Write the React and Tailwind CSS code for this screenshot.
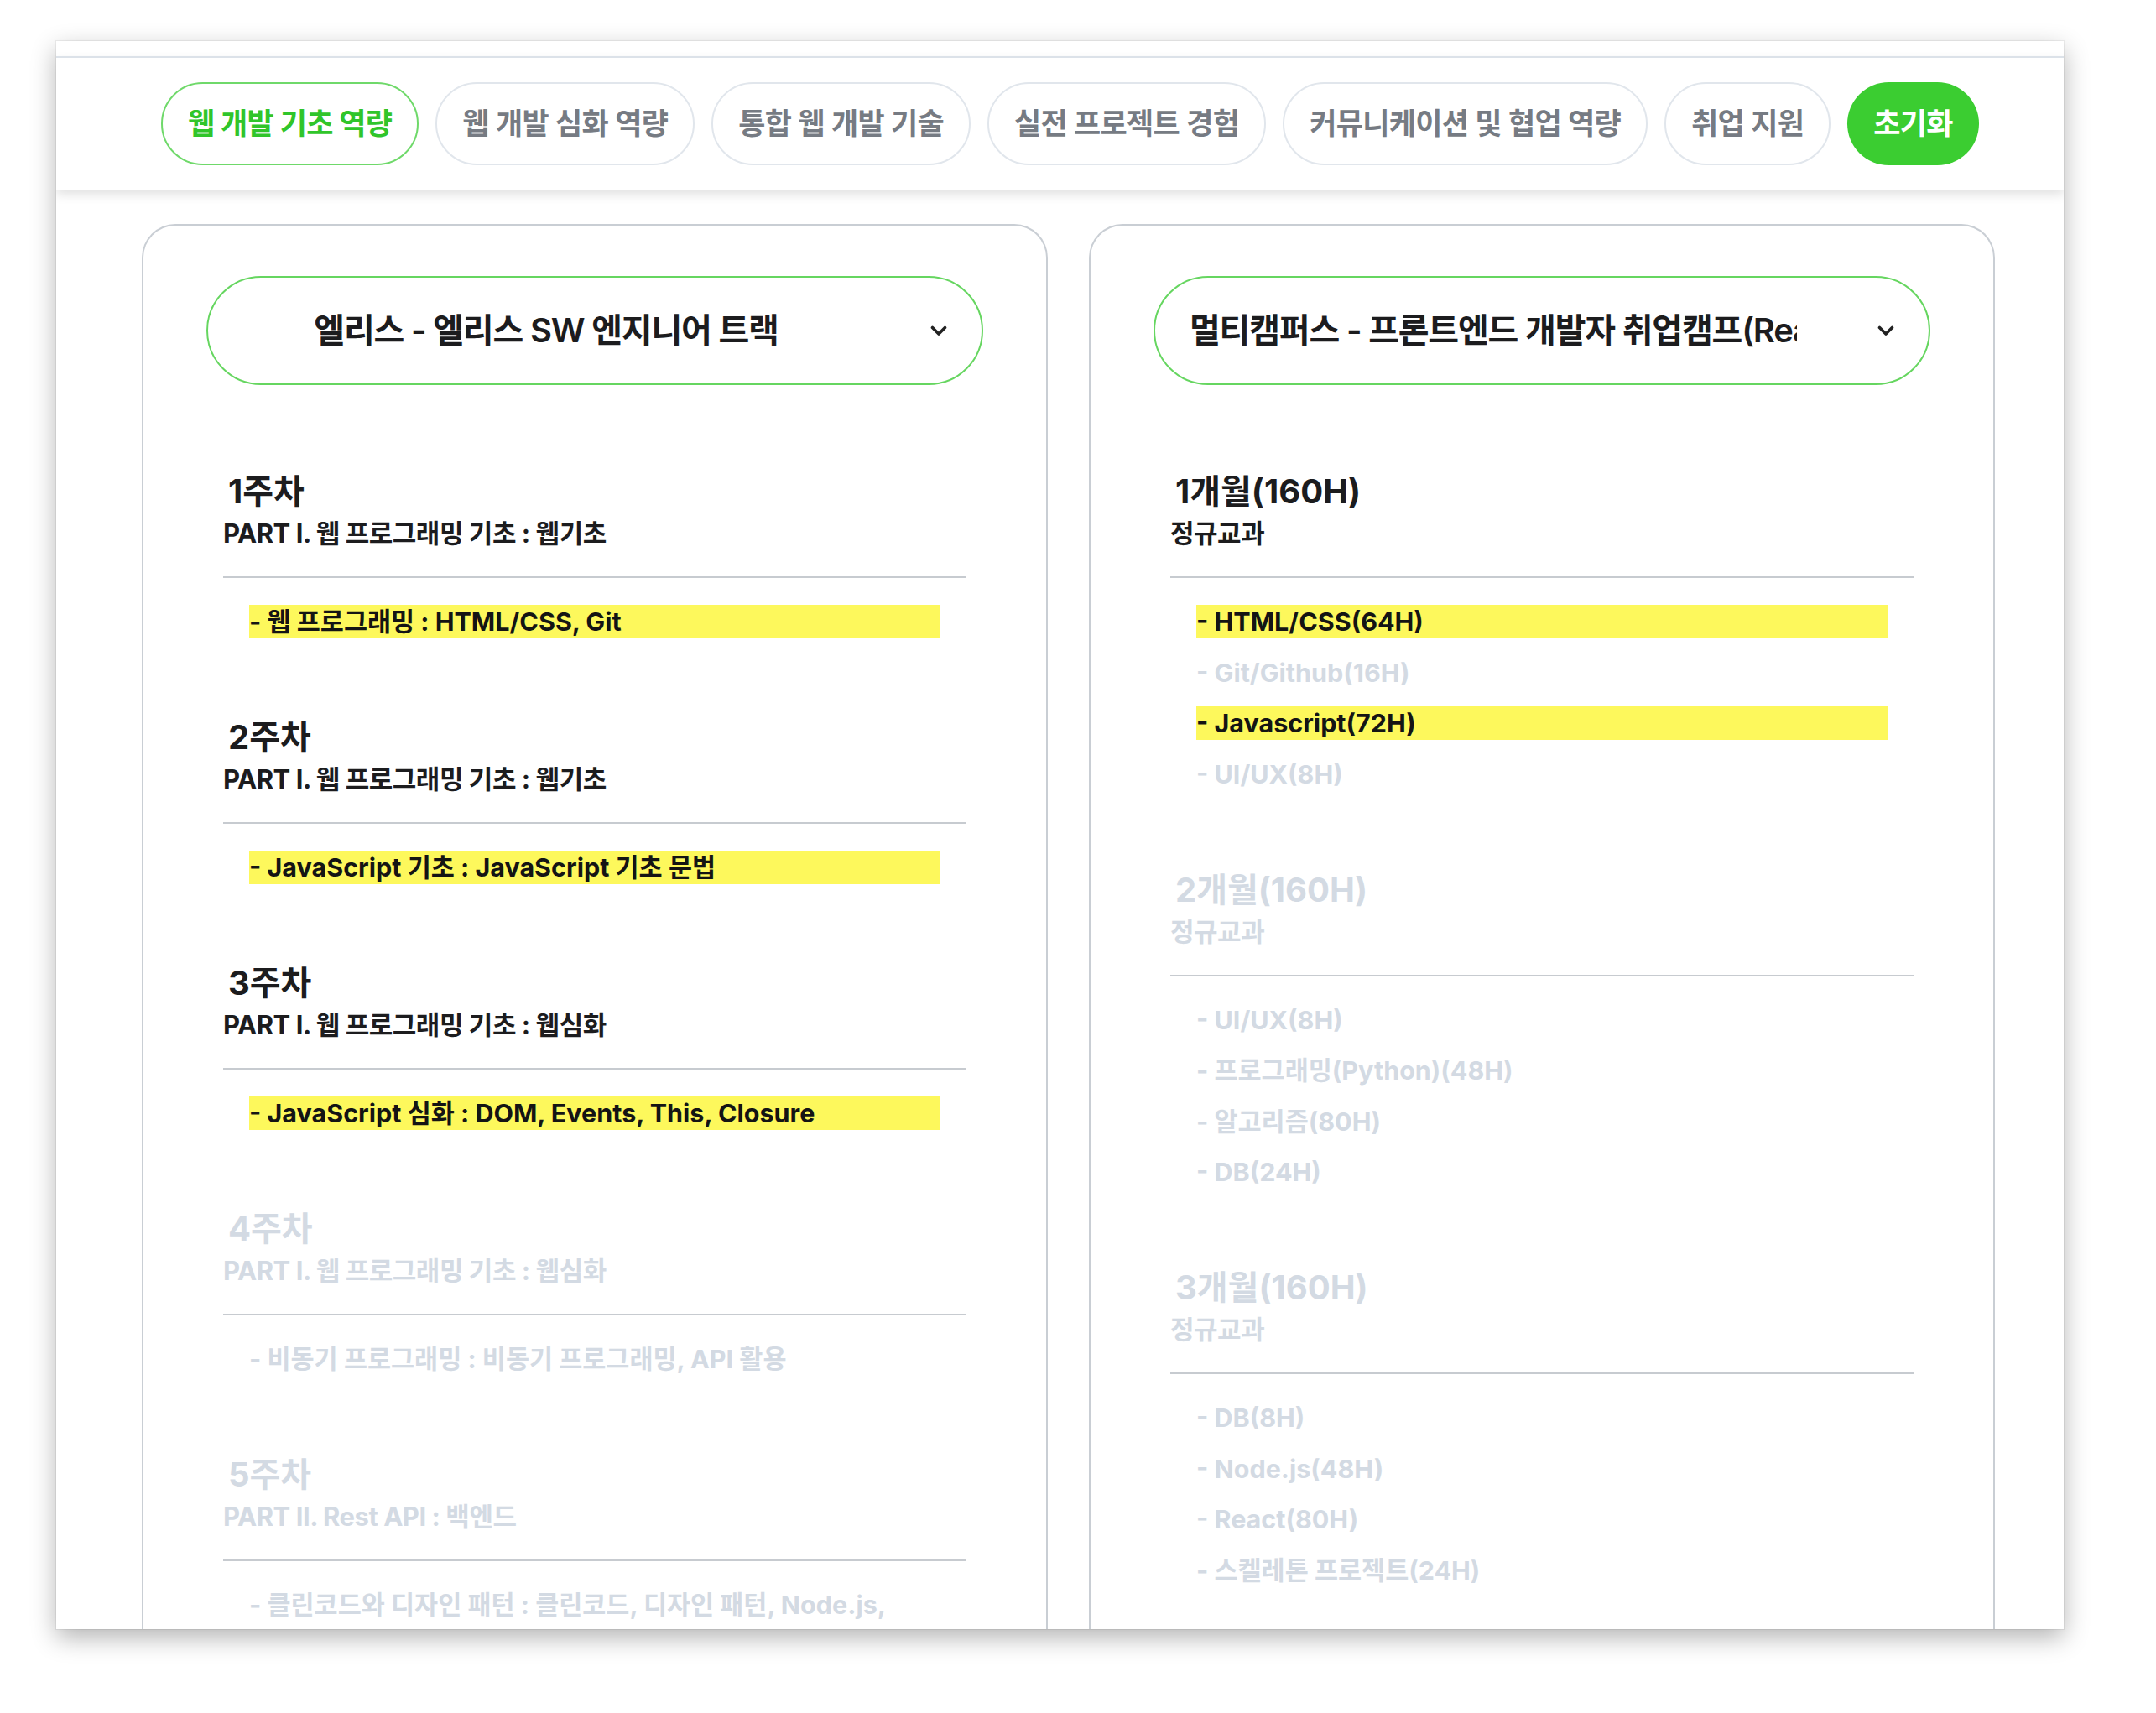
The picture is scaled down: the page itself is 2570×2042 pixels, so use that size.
/**
 * App.jsx — curriculum comparison view
 * Tab bar of competency filters on top, two course cards below,
 * each with a course select and a list of periods. Items that match
 * the active filter are highlighted, the rest are greyed out.
 */

const TABS = [
  { label: '웹 개발 기초 역량', active: true },
  { label: '웹 개발 심화 역량' },
  { label: '통합 웹 개발 기술' },
  { label: '실전 프로젝트 경험' },
  { label: '커뮤니케이션 및 협업 역량' },
  { label: '취업 지원' },
]

const LEFT = {
  course: '엘리스 - 엘리스 SW 엔지니어 트랙',
  sections: [
    { title: '1주차', sub: 'PART I. 웹 프로그래밍 기초 : 웹기초', on: true,
      items: [{ t: '- 웹 프로그래밍 : HTML/CSS, Git', hl: true }] },
    { title: '2주차', sub: 'PART I. 웹 프로그래밍 기초 : 웹기초', on: true,
      items: [{ t: '- JavaScript 기초 : JavaScript 기초 문법', hl: true }] },
    { title: '3주차', sub: 'PART I. 웹 프로그래밍 기초 : 웹심화', on: true,
      items: [{ t: '- JavaScript 심화 : DOM, Events, This, Closure', hl: true }] },
    { title: '4주차', sub: 'PART I. 웹 프로그래밍 기초 : 웹심화',
      items: [{ t: '- 비동기 프로그래밍 : 비동기 프로그래밍, API 활용' }] },
    { title: '5주차', sub: 'PART II. Rest API : 백엔드',
      items: [{ t: '- 클린코드와 디자인 패턴 : 클린코드, 디자인 패턴, Node.js, Express' }] },
    { title: '6주차', sub: 'PART II. Rest API : 백엔드',
      items: [{ t: '- 데이터베이스 : MongoDB, Mongoose' }] },
  ],
}

const RIGHT = {
  course: '멀티캠퍼스 - 프론트엔드 개발자 취업캠프(React & Vue)',
  sections: [
    { title: '1개월(160H)', sub: '정규교과', on: true,
      items: [
        { t: '- HTML/CSS(64H)', hl: true },
        { t: '- Git/Github(16H)' },
        { t: '- Javascript(72H)', hl: true },
        { t: '- UI/UX(8H)' },
      ] },
    { title: '2개월(160H)', sub: '정규교과',
      items: [
        { t: '- UI/UX(8H)' },
        { t: '- 프로그래밍(Python)(48H)' },
        { t: '- 알고리즘(80H)' },
        { t: '- DB(24H)' },
      ] },
    { title: '3개월(160H)', sub: '정규교과',
      items: [
        { t: '- DB(8H)' },
        { t: '- Node.js(48H)' },
        { t: '- React(80H)' },
        { t: '- 스켈레톤 프로젝트(24H)' },
      ] },
  ],
}

function Chevron() {
  return (
    <svg width="20" height="13" viewBox="0 0 20 13" fill="none">
      <path d="M2.5 2.5 L10 10 L17.5 2.5" stroke="#222" strokeWidth="3.6" strokeLinecap="round" strokeLinejoin="round" />
    </svg>
  )
}

function Section({ s }) {
  const head = s.on ? 'text-[#1c1c1e]' : 'text-[#d3dae3]'
  return (
    <div className="mx-[20px] pb-[73px]">
      <div className="pb-[31px] border-b-2 border-[#c7cbd0]">
        <div className={`pl-[6px] text-[40px] leading-[50px] font-bold ${head}`}>{s.title}</div>
        <div className={`mt-[5px] text-[31px] leading-[40px] font-bold tracking-[-0.015em] ${head}`}>{s.sub}</div>
      </div>
      <ul className="mt-[32px] flex flex-col gap-[20.5px]">
        {s.items.map((it, i) => (
          <li
            key={i}
            className={`mx-[31px] text-[30.5px] leading-[40px] font-bold ${
              it.hl ? 'bg-[#fdf85c] text-[#141414]' : 'text-[#d3dae3]'
            }`}
          >
            {it.t}
          </li>
        ))}
      </ul>
      <div className="h-[20px]" />
    </div>
  )
}

function CourseCard({ data }) {
  return (
    <div className="w-[1080px] shrink-0 border-2 border-b-0 border-[#c9ced4] rounded-t-[40px] px-[75px] pt-[60px]">
      <div className="h-[130px] rounded-full border-2 border-[#66d660] flex items-center">
        <div className="ml-[41px] w-[724px] overflow-hidden whitespace-nowrap text-center text-[40px] font-semibold text-[#1c1c1e] tracking-[-0.03em]">
          {data.course}
        </div>
        <div className="flex-1 flex justify-end pr-[41px]">
          <Chevron />
        </div>
      </div>
      <div className="mt-[102px]">
        {data.sections.map(s => <Section key={s.title} s={s} />)}
      </div>
    </div>
  )
}

export default function App() {
  return (
    <div className="w-[2570px] h-[2042px] bg-white overflow-hidden pt-[49px] pl-[67px] font-['Inter','Noto_Sans_CJK_KR',sans-serif]">
      <div className="w-[2393px] h-[1893px] bg-white overflow-hidden shadow-[0_10px_28px_rgba(0,0,0,0.30),0_0_0_1px_rgba(0,0,0,0.06)]">

        {/* ── Tab bar ── */}
        <div className="h-[18px]" />
        <div className="relative z-10 border-t-2 border-[#dce2e9] bg-white py-[29px] pl-[125px] shadow-[0_6px_12px_rgba(0,0,0,0.12)]">
          <div className="flex gap-[20px]">
            {TABS.map(t => (
              <button
                key={t.label}
                className={`h-[99px] rounded-full border-2 px-[30px] text-[35px] tracking-[-0.02em] whitespace-nowrap ${
                  t.active
                    ? 'border-[#6fd96a] text-[#30c52a] font-bold'
                    : 'border-[#e1e6ec] text-[#767b83] font-semibold'
                }`}
              >
                {t.label}
              </button>
            ))}
            <button className="h-[99px] rounded-full bg-[#3bcd31] px-[31px] text-[35px] tracking-[-0.02em] font-bold text-white">
              초기화
            </button>
          </div>
        </div>

        {/* ── Course cards ── */}
        <div className="flex gap-[49px] pl-[102px] pt-[41px]">
          <CourseCard data={LEFT} />
          <CourseCard data={RIGHT} />
        </div>

      </div>
    </div>
  )
}
